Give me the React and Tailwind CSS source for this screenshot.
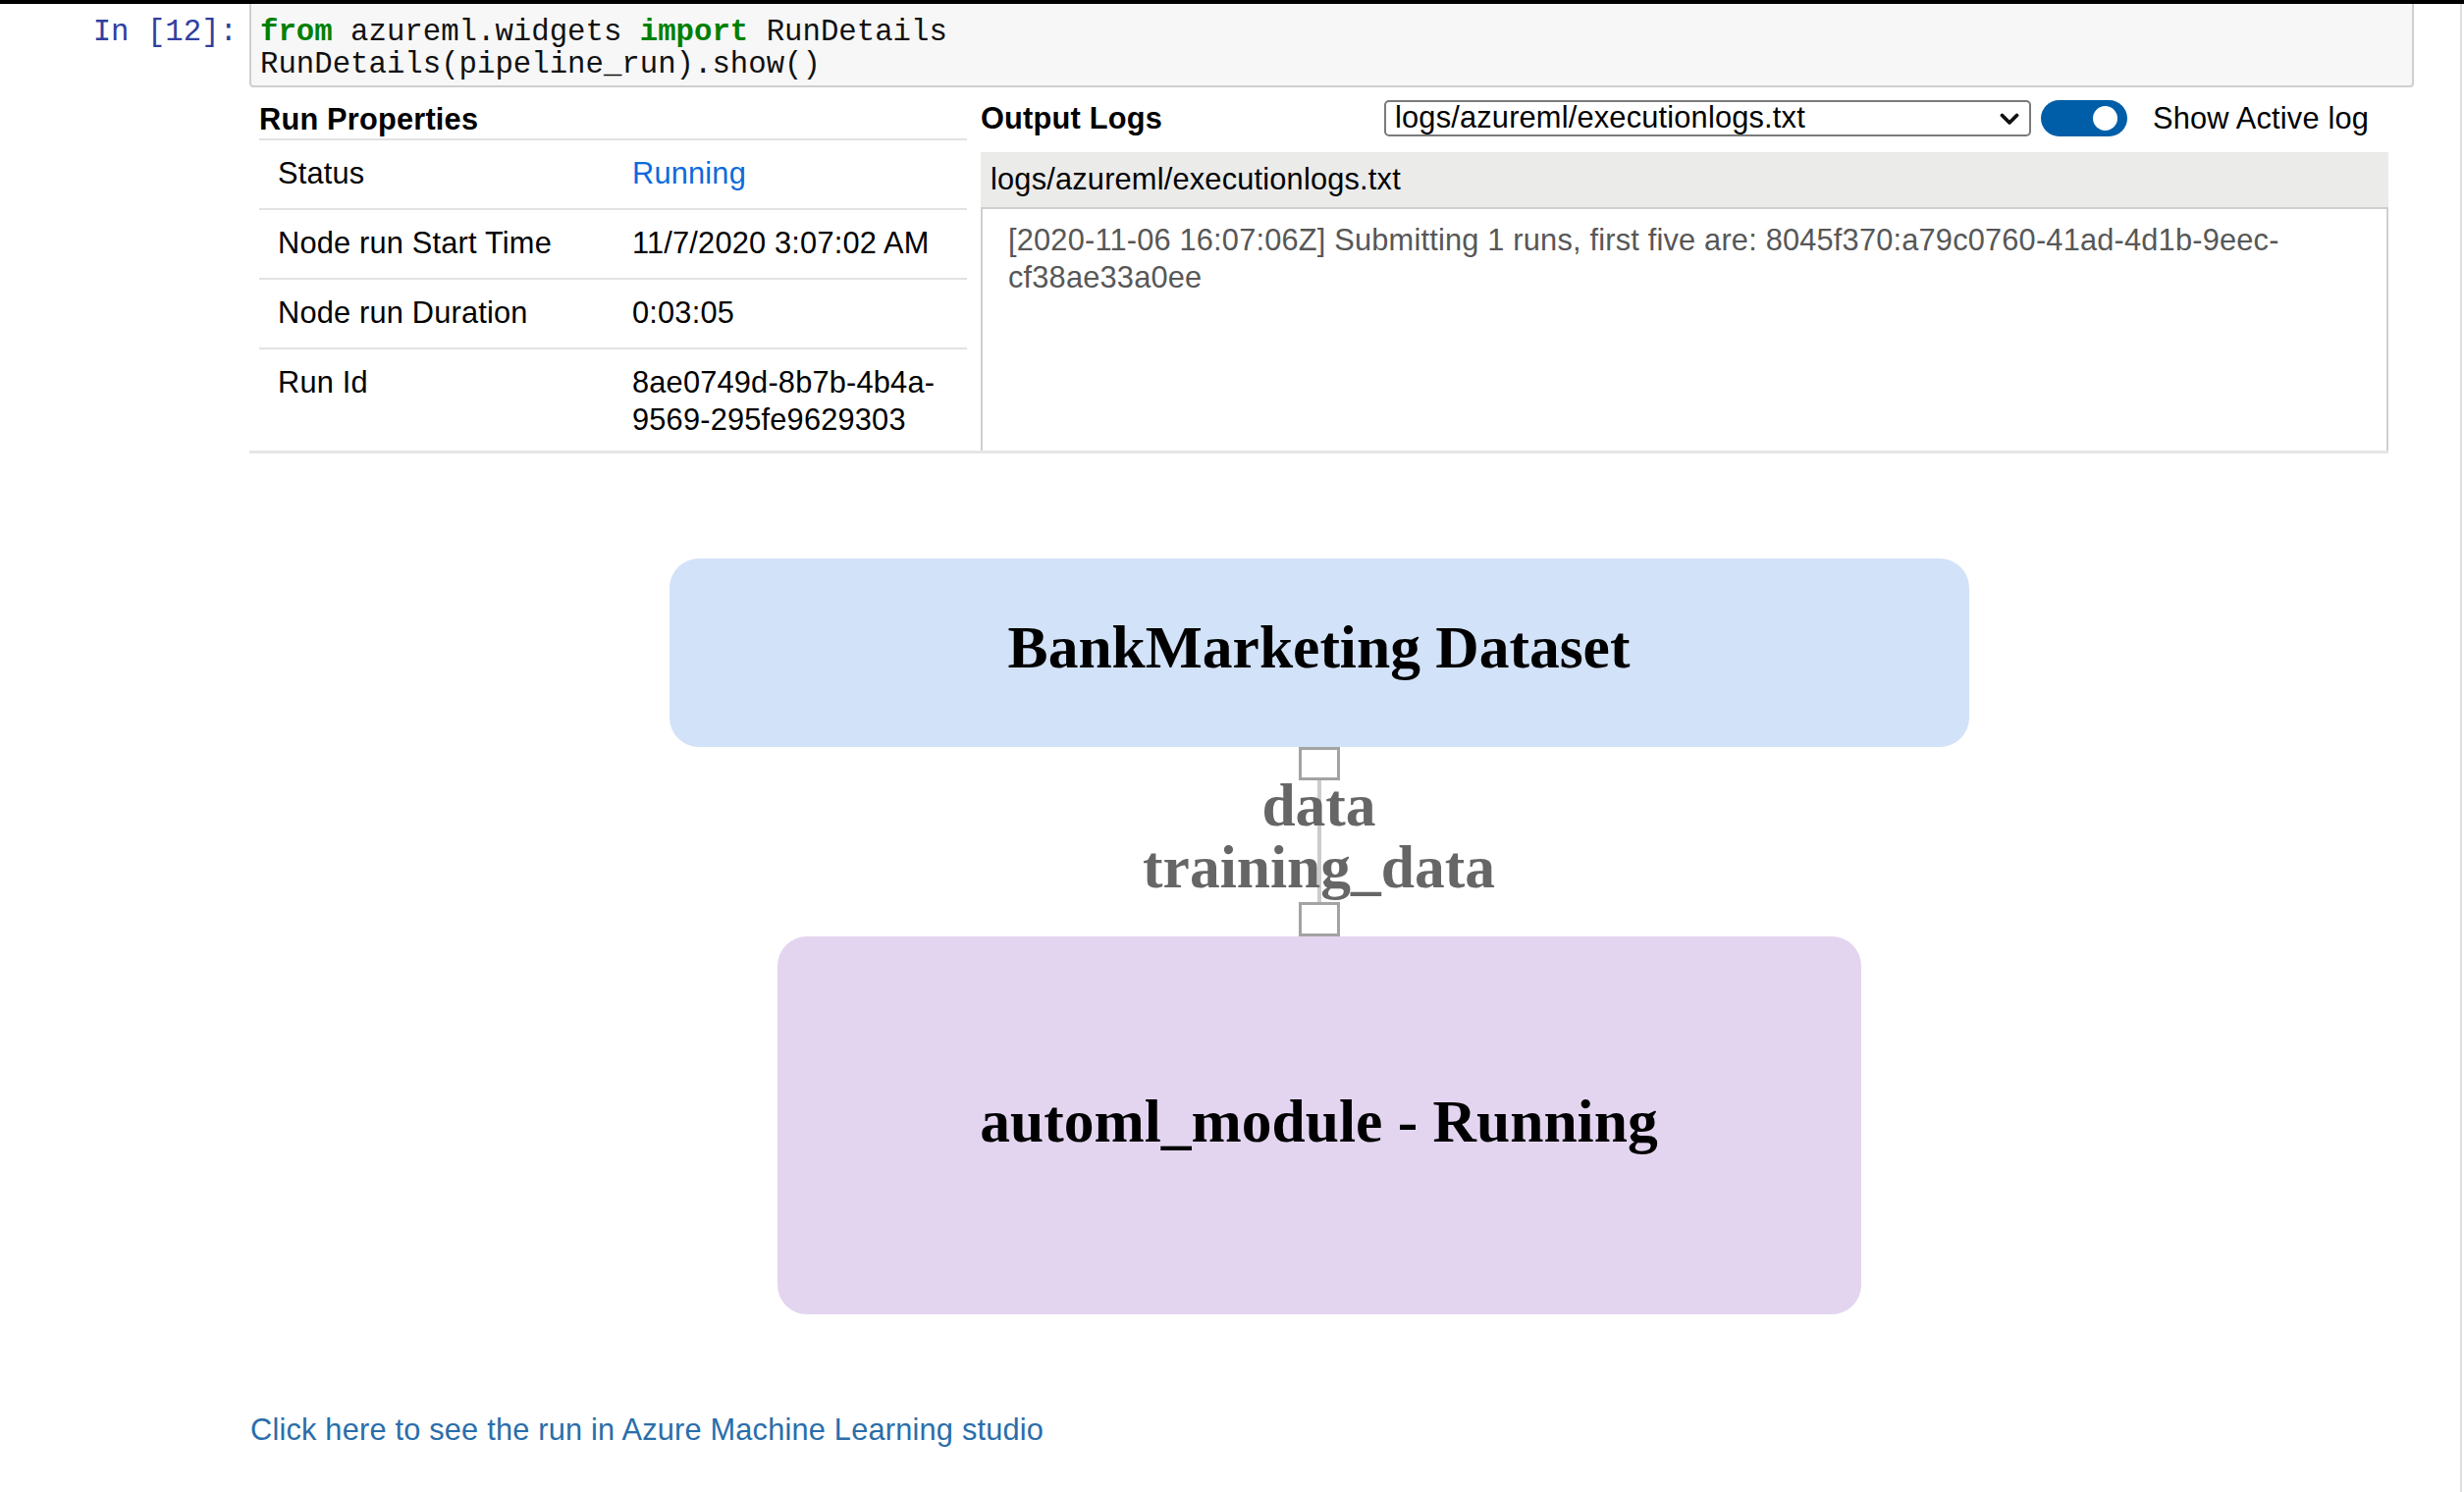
import React from "react";

const sans = "font-['Liberation_Sans',Arial,Helvetica,sans-serif]";
const mono = "font-['Liberation_Mono','Courier_New',monospace]";
const serif = "font-['Liberation_Serif','Times_New_Roman',Times,serif]";

function Row({ label, children, last }) {
  return (
    <div
      className={
        "flex pt-[15px] leading-[38px] " +
        (last ? "pb-[12px]" : "pb-[16px] border-b-2 border-[#e2e2e2]")
      }
    >
      <div className="w-[361px] pl-[19px] text-black">{label}</div>
      <div className="flex-1 pl-[19px] text-black">{children}</div>
    </div>
  );
}

export default function App() {
  return (
    <div className={"w-[2510px] h-[1520px] bg-white overflow-hidden text-[30.75px] tracking-[0.2px] " + sans}>
      <div className="h-[4px] bg-black" />
      <div className="flex h-[1516px]">
        <div className="w-[2506px]">
          {/* code cell */}
          <div className="flex">
            <div
              className={
                "w-[254px] shrink-0 text-right pr-[12px] pt-[12px] leading-[33px] text-[30.7px] tracking-normal text-[#303f9f] " +
                mono
              }
            >
              In [12]:
            </div>
            <div
              className={
                "w-[2205px] h-[85px] bg-[#f7f7f7] border-x-2 border-b-2 border-[#cfcfcf] rounded-b-[4px] pl-[9px] pt-[12px] leading-[33px] text-[30.7px] tracking-normal text-[#111] whitespace-pre " +
                mono
              }
            >
              <div>
                <span className="font-bold text-[#008000]">from</span> azureml.widgets{" "}
                <span className="font-bold text-[#008000]">import</span> RunDetails
              </div>
              <div>RunDetails(pipeline_run).show()</div>
            </div>
          </div>

          {/* widget */}
          <div className="ml-[254px] w-[2179px] border-b-[3px] border-[#e6e6e6] flex gap-[14px] pl-[10px]">
            <div className="w-[721px] shrink-0">
              <div className="pt-[14px] leading-[38px] font-bold text-black border-b-2 border-[#e2e2e2]">
                Run Properties
              </div>
              <Row label="Status">
                <span className="text-[#0b6bdc]">Running</span>
              </Row>
              <Row label="Node run Start Time">11/7/2020 3:07:02 AM</Row>
              <Row label="Node run Duration">0:03:05</Row>
              <Row label="Run Id" last>
                8ae0749d-8b7b-4b4a-
                <br />
                9569-295fe9629303
              </Row>
            </div>

            <div className="flex-1 flex flex-col">
              <div className="pt-[13px] flex items-center h-[50px]">
                <div className="w-[411px] font-bold text-black leading-[37px]">Output Logs</div>
                <div className="w-[659px] h-[37px] border-2 border-[#7a7a7a] rounded-[5px] bg-white flex items-center justify-between pl-[9px] pr-[10px]">
                  <span className="leading-none text-black">logs/azureml/executionlogs.txt</span>
                  <svg width="20" height="13" viewBox="0 0 20 13" className="mt-[2px]">
                    <path d="M2.5 2.5 L10 10 L17.5 2.5" fill="none" stroke="#111" strokeWidth="3.8" strokeLinecap="round" strokeLinejoin="round" />
                  </svg>
                </div>
                <div className="ml-[10px] w-[88px] h-[37px] rounded-full bg-[#005ea8] flex items-center justify-end pr-[10px]">
                  <div className="w-[25px] h-[25px] rounded-full bg-white" />
                </div>
                <div className="ml-[26px] text-black leading-[37px] whitespace-nowrap">Show Active log</div>
              </div>
              <div className="mt-[16px] h-[56px] bg-[#ebebea] flex items-center pl-[10px] text-black">
                logs/azureml/executionlogs.txt
              </div>
              <div className="h-[248px] border-t-2 border-x-2 border-[#cfcfcf] pl-[26px] pt-[13px] leading-[38px] text-[#575757]">
                [2020-11-06 16:07:06Z] Submitting 1 runs, first five are: 8045f370:a79c0760-41ad-4d1b-9eec-
                <br />
                cf38ae33a0ee
              </div>
            </div>
          </div>

          {/* pipeline graph */}
          <div className={"ml-[254px] w-[2179px] mt-[107px] flex flex-col items-center font-bold tracking-normal " + serif}>
            <div className="w-[1324px] h-[192px] rounded-[30px] bg-[#d2e2f8] flex items-center justify-center pb-[10px]">
              <span className="text-[61.5px] leading-none text-black">BankMarketing Dataset</span>
            </div>
            <div className="relative w-[42px] h-[193px] flex flex-col items-center">
              <div className="w-[42px] h-[34px] border-[3px] border-[#a3a3a3] bg-white" />
              <div className="w-[4px] flex-1 bg-[#cccccc]" />
              <div className="w-[42px] h-[35px] border-[3px] border-[#a3a3a3] bg-white" />
              <div className="absolute top-[28px] left-1/2 -translate-x-1/2 whitespace-nowrap text-center text-[61.5px] leading-[63px] text-[#666666]">
                <div>data</div>
                <div>training_data</div>
              </div>
            </div>
            <div className="w-[1104px] h-[385px] rounded-[30px] bg-[#e3d5f0] flex items-center justify-center pb-[8px]">
              <span className="text-[61.5px] leading-none text-black">automl_module - Running</span>
            </div>
          </div>

          {/* link */}
          <div className="ml-[255px] mt-[99px] leading-[38px] text-[#296eaa]">
            Click here to see the run in Azure Machine Learning studio
          </div>
        </div>
        <div className="w-[2px] bg-[#dedede]" />
      </div>
    </div>
  );
}
